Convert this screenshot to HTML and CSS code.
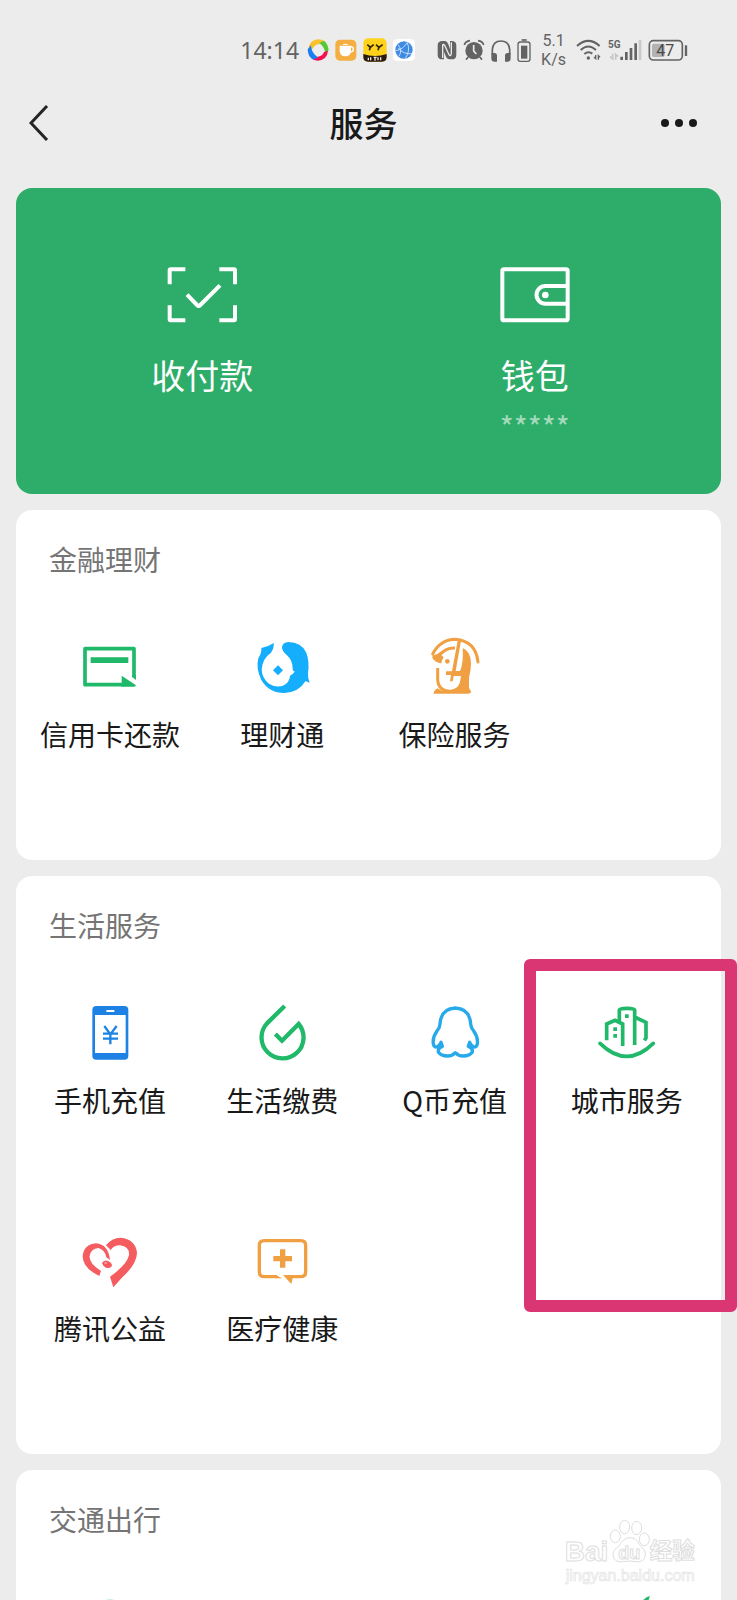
FILE: index.html
```html
<!DOCTYPE html>
<html lang="zh-CN">
<head>
<meta charset="utf-8">
<meta name="viewport" content="width=device-width, initial-scale=1">
<title>服务</title>
<link rel="stylesheet" href="styles.css">
</head>
<body>
<div class="screen">
  <div class="status">
    <span class="clock">14:14</span>
    <div class="apps">
      <svg width="22" height="22" viewBox="229 43 66 66">
        <path d="M234 76Q234 46 262 44Q274 44 282 50L266 58Q252 60 246 72Z" fill="#fbc02d"/><path d="M266 55L280 48Q292 58 294 76L284 90Q284 68 266 55Z" fill="#55c935"/><path d="M292 78Q290 104 262 108Q252 108 246 104L262 96Q276 94 280 82Z" fill="#f5114f"/><path d="M262 98L248 105Q232 98 231 74L241 62Q242 86 262 98Z" fill="#1c7df0"/>
      </svg>
      <svg width="22" height="22" viewBox="314 43 66 66">
        <rect x="315" y="45" width="63" height="63" rx="14" fill="#f5ae42"/><path d="M328 63H362V80Q361 95 345 95T328 80Z" fill="#fff"/><path d="M336 61Q345 54 354 61" fill="#fff"/><circle cx="361" cy="74" r="8" fill="none" stroke="#fff" stroke-width="4"/>
      </svg>
      <svg width="24" height="24" viewBox="395 40 72 72">
        <rect x="396" y="41" width="70" height="70" rx="14" fill="#ffd21c"/><path d="M396 88Q431 100 466 88V97Q466 111 452 111H410Q396 111 396 97Z" fill="#271b12"/><path d="M408 60L417 68L427 60M417 68L414 77M434 60L443 68L454 60M443 68L440 77" fill="none" stroke="#30220e" stroke-width="5"/><path d="M411 99V107M418 98V107M427 98H436M431 98V108M440 98V107M448 98V107" stroke="#f5e7d5" stroke-width="4"/>
      </svg>
      <svg width="22" height="22" viewBox="483 43 66 66">
        <rect x="483" y="43" width="66" height="66" rx="13" fill="#fff"/><circle cx="516" cy="76" r="26" fill="#408be2"/><path d="M491 78Q512 76 526 53M499 70Q514 90 541 87M526 54Q536 78 520 101M501 95Q512 77 498 60" stroke="#d9ebff" stroke-width="2.5" fill="none"/>
      </svg>
    </div>
    <div class="signals">
      <svg width="20" height="30" viewBox="16 30 60 90">
        <path d="M18 62Q18 48 32 48H40Q46 48 50 58L55 72V48H60Q74 48 74 62V89Q74 103 60 103H53Q46 103 42 93L37 80V103H32Q18 103 18 89Z" fill="#636363"/><path d="M33 99V60Q36 55 41 65L52 89Q57 96 59 86V52" fill="none" stroke="#ececec" stroke-width="4"/>
      </svg>
      <svg width="22" height="30" viewBox="96 30 66 90">
        <circle cx="129" cy="77" r="26" fill="#636363"/><path d="M100 60Q103 49 117 47M158 60Q155 49 141 47M112 96L105 104M146 96L153 104" stroke="#636363" stroke-width="5" fill="none"/><path d="M128 60V78L136 87" stroke="#ececec" stroke-width="5" fill="none"/>
      </svg>
      <svg width="20" height="30" viewBox="176 30 60 90">
        <path d="M180 88V74Q182 48 206 48T232 74V88" fill="none" stroke="#636363" stroke-width="5"/><path d="M177 84H186Q194 84 194 92V110H185Q177 110 177 100ZM235 84H226Q218 84 218 92V110H227Q235 110 235 100Z" fill="#636363"/>
      </svg>
      <svg width="14" height="30" viewBox="245 30 42 90">
        <rect x="248" y="51" width="36" height="58" rx="7" fill="none" stroke="#636363" stroke-width="4"/><rect x="257" y="62" width="19" height="39" fill="#636363"/><path d="M259 45H274" stroke="#636363" stroke-width="5"/>
      </svg>
      <span class="speed"><span>5.1</span><span>K/s</span></span>
      <svg width="26" height="30" viewBox="424 30 78 90" fill="none" stroke="#636363" stroke-width="6">
        <path d="M427 63Q461 32 495 63M438 75Q461 54 484 75M449 87Q461 77 473 86"/><circle cx="461" cy="99" r="5" fill="#636363" stroke="none"/><path d="M483 90V101L478 96M491 104V92L496 97" stroke-width="4"/>
      </svg>
      <svg width="34" height="30" viewBox="513 30 102 90">
        <text class="net" x="513" y="69">5G</text><path d="M527 86V102L519 95M536 104V88L543 95" fill="none" stroke="#c5c5c5" stroke-width="5"/><path d="M554 105V95M568 105V81M582 105V69M596 105V55" stroke="#636363" stroke-width="8"/><path d="M609 105V45" stroke="#c9c9c9" stroke-width="8"/>
      </svg>
      <svg width="40" height="30" viewBox="637 30 120 90">
        <rect x="641" y="47" width="99" height="58" rx="12" fill="none" stroke="#636363" stroke-width="5"/><rect x="649" y="56" width="38" height="40" rx="5" fill="#b2b2b2"/><path d="M751 61V93" stroke="#636363" stroke-width="7"/><text class="charge" x="662" y="94">47</text>
      </svg>
    </div>
  </div>

  <header class="bar">
    <button class="back" aria-label="返回"><svg width="20" height="36" viewBox="0 0 20 36" fill="none" stroke="#242424" stroke-width="3"><path d="M18 1L2 18L18 35"/></svg></button>
    <h1 class="title">服务</h1>
    <button class="more" aria-label="更多"><svg width="38" height="10" viewBox="0 0 38 10" fill="#191919"><circle cx="5" cy="5" r="4"/><circle cx="19" cy="5" r="4"/><circle cx="33" cy="5" r="4"/></svg></button>
  </header>

  <main class="cards">
    <section class="pay">
      <a class="pay-item" href="#pay">
        <svg width="72" height="60" viewBox="76 44 216 180" fill="none" stroke="#fff" stroke-width="12"><path d="M134 57H90Q87 57 87 60V102M236 57H280Q283 57 283 60V102M87 165V207Q87 210 90 210H134M236 210H280Q283 210 283 207V165"/><path d="M139 133L169 164Q174 169 179 164L238 105"/></svg>
        <span class="pay-label">收付款</span>
      </a>
      <a class="pay-item" href="#wallet">
        <svg width="72" height="60" viewBox="1077 44 216 180" fill="none" stroke="#fff" stroke-width="12"><rect x="1087" y="57" width="196" height="153" rx="5"/><path d="M1283 107H1216A26 26 0 0 0 1216 160H1283"/><circle cx="1216" cy="134" r="10" fill="#fff" stroke="none"/></svg>
        <span class="pay-label">钱包</span>
        <span class="balance">*****</span>
      </a>
    </section>

    <section class="card">
      <h2 class="card-title">金融理财</h2>
      <div class="grid">
        <a class="item" href="#card">
          <svg class="icon" viewBox="150 321 180 180"><path d="M312 442V356H165V464H282" fill="none" stroke="#20b869" stroke-width="11" stroke-linejoin="round"/><path d="M182 382H295V399H182ZM275 437L318 466Q317 470 312 470H275ZM306 436V440L318 450V436Z" fill="#20b869"/></svg>
          <span>信用卡还款</span>
        </a>
        <a class="item" href="#licaitong">
          <svg class="icon" viewBox="37 51 180 180" fill="#14aefc"><path d="M65 84Q85 81 102 69Q104 84 94 98Q68 116 66 148Q67 176 88 191Q108 204 130 197Q150 187 151 167Q160 163 166 154Q160 156 159 148Q160 122 142 106Q127 95 127 82Q129 67 146 66Q185 66 200 98Q210 125 205 160Q204 172 210 189Q203 184 197 184Q178 217 134 219Q88 219 65 180Q48 145 56 115Q67 97 65 84Z"/><path d="M115 136L130 151L115 166L100 151Z"/></svg>
          <span>理财通</span>
        </a>
        <a class="item" href="#insurance">
          <svg class="icon" viewBox="554 51 180 180"><path d="M577 102Q600 59 645 58Q706 63 713 126" fill="none" stroke="#f0a043" stroke-width="9" stroke-linecap="round"/><path d="M577 111Q596 107 610 94Q624 83 644 84" fill="none" stroke="#f0a043" stroke-width="9"/><path d="M575 112L600 103L610 112Q604 120 603 130Q584 129 575 112Z" fill="#f0a043"/><circle cx="621" cy="124" r="7" fill="#f0a043"/><path d="M592 144V180Q594 212 628 214Q664 212 666 172" fill="none" stroke="#f0a043" stroke-width="9"/><path d="M667 84Q692 94 692 130Q692 150 686 174V203L693 217Q690 221 683 221H580Q580 212 591 205Q606 216 628 216Q662 210 662 168H640L637 184H629L632 165H617V154H635L652 62H662L646 153H659Q670 130 667 84Z" fill="#f0a043"/></svg>
          <span>保险服务</span>
        </a>
      </div>
    </section>

    <section class="card">
      <h2 class="card-title">生活服务</h2>
      <div class="grid">
        <a class="item" href="#topup">
          <svg class="icon" viewBox="150 69 180 180"><rect x="187" y="78" width="108" height="161" rx="12" fill="#1d82e3"/><path d="M195 105H287V219H195ZM229 90H253V96H229Z" fill="#fff"/><path d="M223 138L241 163L260 138M241 163V193M219 161H264M219 176H264" fill="none" stroke="#1d82e3" stroke-width="7"/></svg>
          <span>手机充值</span>
        </a>
        <a class="item" href="#bills">
          <svg class="icon" viewBox="667 69 180 180"><path d="M765 78L712 130A63 63 0 1 0 807 132L757 182L737 162" fill="none" stroke="#20b869" stroke-width="13"/></svg>
          <span>生活缴费</span>
        </a>
        <a class="item" href="#qcoin">
          <svg class="icon" viewBox="104 159 180 180"><path d="M195 174Q152 176 149 222Q149 232 140 243Q126 262 129 282Q132 294 141 290Q148 286 152 277L156 289Q142 294 144 306Q152 318 172 318Q186 318 195 308Q204 318 218 318Q238 318 246 306Q248 294 234 289L238 277Q242 286 249 290Q258 294 261 282Q264 262 250 243Q241 232 241 222Q238 176 195 174Z" fill="none" stroke="#27a9ea" stroke-width="10" stroke-linejoin="round"/></svg>
          <span>Q币充值</span>
        </a>
        <a class="item marked" href="#city">
          <svg class="icon" viewBox="621 159 180 180" fill="none" stroke="#20b869" stroke-width="11"><path d="M650 271V222L675 211L698 222V288M688 214V180Q688 175 711 175Q734 175 734 180V285M734 201L768 217V264L763 271"/><path d="M630 280Q710 358 790 280" stroke-linecap="round"/><path d="M670 232H681V243H670ZM670 252H681V263H670ZM705 193H716V204H705Z" fill="#20b869" stroke="none"/></svg>
          <span>城市服务</span>
        </a>
        <a class="item" href="#charity">
          <svg class="icon" viewBox="150 33 180 180" fill="#f45c60"><path d="M240 120Q235 73 198 70Q160 74 158 110Q160 145 208 168L213 153Q176 130 179 108Q183 86 205 84Q225 89 229 112Z"/><path d="M228 76Q245 53 272 53Q316 57 321 98Q321 131 277 172L250 202L240 170Q291 134 297 106Q299 79 270 76Q250 76 242 90Z"/><path d="M216 130Q220 120 232 122Q246 127 246 137Q241 147 228 143Q219 139 216 130Z"/><path d="M223 129H231" stroke="#fff" stroke-width="2"/></svg>
          <span>腾讯公益</span>
        </a>
        <a class="item" href="#health">
          <svg class="icon" viewBox="667 33 180 180" fill="#f0a043"><path d="M742 170H704Q689 170 689 156V76Q689 62 704 62H813Q828 62 828 76V156Q828 170 813 170H785" fill="none" stroke="#f0a043" stroke-width="10"/><path d="M738 165L758 175H738ZM760 165H795L789 175L785 192ZM751 88H767V108H787V124H767V143H751V124H731V108H751Z"/></svg>
          <span>医疗健康</span>
        </a>
      </div>
    </section>

    <section class="card">
      <h2 class="card-title">交通出行</h2>
      <div class="grid">
        <a class="item" href="#travel" aria-label="出行服务">
          <svg class="icon" viewBox="0 0 60 60"><circle cx="30" cy="26" r="22" fill="none" stroke="#8fd0c6" stroke-width="3"/></svg>
        </a>
        <a class="item last" href="#ride" aria-label="骑行">
          <svg class="icon" viewBox="0 0 60 60"><path d="M53 -1Q47 0 43 8L49 10Z" fill="#20b869"/></svg>
        </a>
      </div>
    </section>
  </main>

  <svg class="watermark" width="138" height="68" viewBox="66 84 414 204" fill="#fff" stroke="#dedede" stroke-width="3">
    <text class="wm-brand" x="74" y="213">Bai</text>
    <ellipse cx="226" cy="139" rx="15" ry="19"/><ellipse cx="254" cy="111" rx="15" ry="20"/><ellipse cx="290" cy="114" rx="15" ry="20"/><ellipse cx="313" cy="148" rx="15" ry="19"/>
    <path d="M269 143Q290 143 298 164Q318 180 316 196Q312 219 288 215Q269 211 250 215Q222 219 219 196Q218 181 238 167Q249 144 269 143Z"/>
    <text class="wm-du" x="235" y="206">du</text>
    <text class="wm-cn" x="329" y="208">经验</text>
    <text class="wm-url" x="77" y="273">jingyan.baidu.com</text>
  </svg>
</div>
</body>
</html>
```
FILE: styles.css
```css
* {
  box-sizing: border-box;
}

body {
  margin: 0;
  background: #ececec;
  color: #191919;
  font-family: "Noto Sans CJK SC", sans-serif;
}

svg {
  display: block;
  flex: none;
}

a {
  color: inherit;
  text-decoration: none;
}

button {
  padding: 0;
  border: 0;
  background: none;
}

.screen {
  position: relative;
  height: 100vh;
  overflow: hidden;
}

.status {
  display: flex;
  align-items: center;
  justify-content: flex-end;
  height: 65px;
  padding: 35px 49px 0 0;
  color: #636363;
}

.clock {
  margin-right: 8px;
  font: 23px/30px "Noto Sans", sans-serif;
}

.apps {
  display: flex;
  align-items: center;
  gap: 6px;
  margin-right: 22px;
}

.signals {
  display: flex;
  align-items: center;
  gap: 6px;
}

.speed {
  display: flex;
  flex-direction: column;
  align-items: center;
  margin: 0 4px;
  font: 16px/19px "Roboto", sans-serif;
}

.net {
  font: bold 30px "Roboto", sans-serif;
  fill: #636363;
}

.charge {
  font: 400 48px "Roboto", sans-serif;
  fill: #4a4a4a;
}

.bar {
  display: grid;
  grid-template-columns: 1fr auto 1fr;
  align-items: center;
  padding: 34px 39px 41px 29px;
}

.back {
  justify-self: start;
}

.more {
  justify-self: end;
}

.title {
  margin: 0;
  font-size: 34px;
  font-weight: 500;
  line-height: 48px;
}

.cards {
  display: flex;
  flex-direction: column;
  gap: 16px;
  padding: 0 16px;
}

.pay {
  display: grid;
  grid-template-columns: 1fr 1fr;
  min-height: 306px;
  padding: 77px 20px 0;
  border-radius: 16px;
  background: #2dad69;
  color: #fff;
}

.pay-item {
  display: flex;
  flex-direction: column;
  align-items: center;
}

.pay-label {
  margin-top: 26px;
  font-size: 34px;
  line-height: 48px;
}

.balance {
  font-size: 30px;
  line-height: 54px;
  color: #a4dabc;
}

.card {
  border-radius: 16px;
  background: #fff;
}

.card-title {
  margin: 0;
  padding: 29px 33px 53px;
  color: #757575;
  font-size: 28px;
  font-weight: 400;
  line-height: 40px;
}

.grid {
  display: grid;
  grid-template-columns: repeat(4, 1fr);
  grid-auto-rows: 228px;
  padding: 0 8px;
}

.item {
  display: flex;
  flex-direction: column;
  align-items: center;
  gap: 17px;
  padding-top: 5px;
  font-size: 28px;
  line-height: 40px;
  white-space: nowrap;
}

.item.last {
  grid-column: 4;
}

.icon {
  width: 60px;
  height: 60px;
  overflow: visible;
}

.marked {
  position: relative;
}

.marked::after {
  content: "";
  position: absolute;
  inset: -39px -24px -86px -17px;
  border: 12px solid #d93673;
  border-radius: 6px;
}

.watermark {
  position: absolute;
  right: 37px;
  bottom: 14px;
}

.wm-brand {
  font: bold 84px "Liberation Sans", sans-serif;
}

.wm-du {
  font: bold 54px "Liberation Sans", sans-serif;
}

.wm-cn {
  font: bold 68px "Noto Sans CJK SC", sans-serif;
}

.wm-url {
  font: 48px "Liberation Sans", sans-serif;
  stroke: #e3e3e3;
  stroke-width: 2px;
}
```
